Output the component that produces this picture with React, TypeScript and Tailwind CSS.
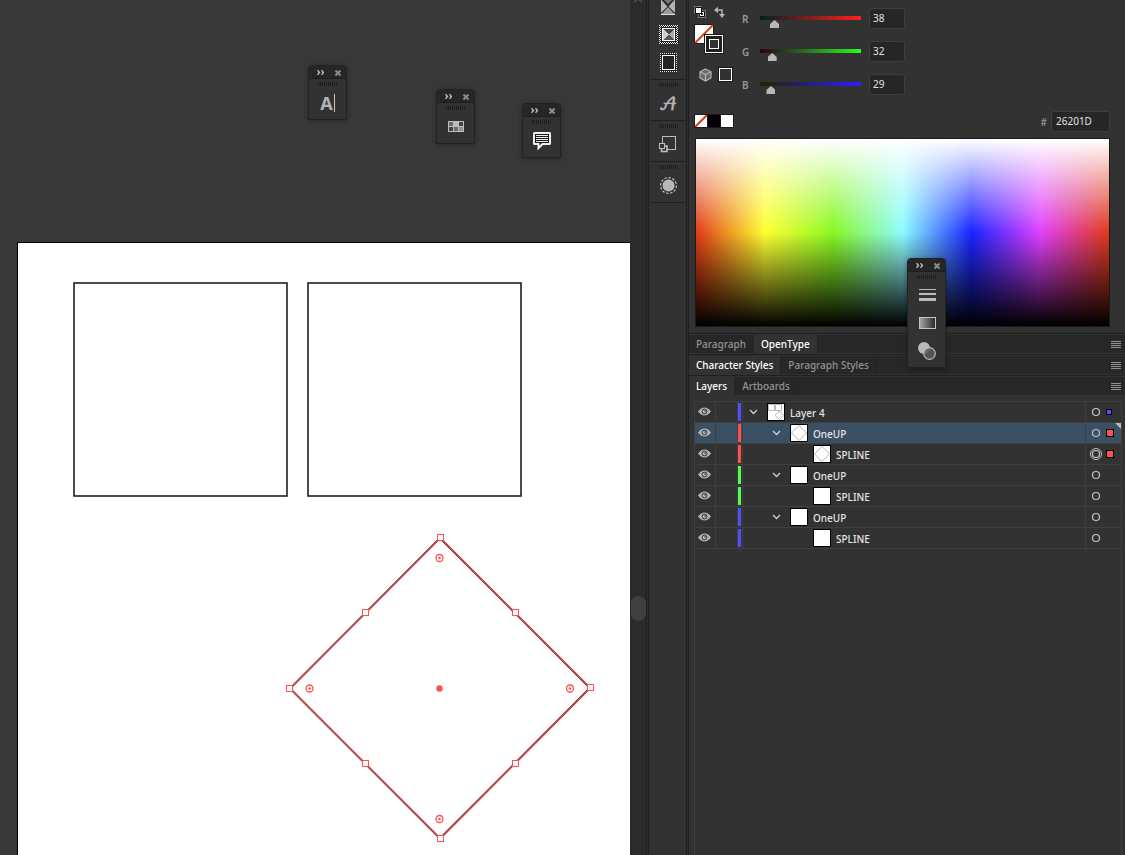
import { useState, type ReactNode } from "react";
import clsx from "clsx";

type Layer = {
  id: number;
  name: string;
  depth: number;
  bar: string;
  thumb: "page" | "diamond" | "blank";
  open?: boolean;
  selected?: boolean;
  targeted?: boolean;
  mark?: "small" | "large";
};

const layers: Layer[] = [
  { id: 1, name: "Layer 4", depth: 0, bar: "bg-[#4f4fff]", thumb: "page", open: true, mark: "small" },
  { id: 2, name: "OneUP", depth: 1, bar: "bg-[#ff4f4f]", thumb: "diamond", open: true, selected: true, mark: "large" },
  { id: 3, name: "SPLINE", depth: 2, bar: "bg-[#ff4f4f]", thumb: "diamond", targeted: true, mark: "large" },
  { id: 4, name: "OneUP", depth: 1, bar: "bg-[#4fff4f]", thumb: "blank", open: true },
  { id: 5, name: "SPLINE", depth: 2, bar: "bg-[#4fff4f]", thumb: "blank" },
  { id: 6, name: "OneUP", depth: 1, bar: "bg-[#4f4fff]", thumb: "blank", open: true },
  { id: 7, name: "SPLINE", depth: 2, bar: "bg-[#4f4fff]", thumb: "blank" },
];

const indents = ["pl-1", "pl-[27px]", "pl-[50px]"];

const channels = [
  { name: "R", value: 38, track: "bg-[linear-gradient(to_right,#00201d,#ff201d)]" },
  { name: "G", value: 32, track: "bg-[linear-gradient(to_right,#26001d,#26ff1d)]" },
  { name: "B", value: 29, track: "bg-[linear-gradient(to_right,#262000,#2620ff)]" },
];

const handles = [
  [440.5, 537.5],
  [515.5, 612.5],
  [590.5, 687.5],
  [515.5, 763.5],
  [440.5, 838.5],
  [365.5, 763.5],
  [289.5, 688.5],
  [365.5, 612.5],
];

const cornerWidgets = [
  [439.5, 558],
  [570, 688.5],
  [439.5, 819],
  [309.5, 688.5],
];

const Grip = () => (
  <svg width="19" height="4" className="block" aria-hidden="true">
    {Array.from({ length: 10 }, (_, i) => (
      <rect key={i} x={i * 2} width="1" height="4" fill="#1e1e1e" />
    ))}
  </svg>
);

const Palette = ({ className, label, children }: { className: string; label: string; children: ReactNode }) => (
  <section
    aria-label={label}
    className={clsx("absolute w-[39px] rounded-t border border-[#222] bg-[#323232] shadow-[0_1px_5px_rgba(0,0,0,0.3)]", className)}
  >
    <header className="flex h-[13px] items-center justify-between rounded-t border-b border-[#1e1e1e] bg-[#262626] pt-px pr-[5px] pl-2">
      <button aria-label="Expand panel">
        <svg width="7" height="5" className="block" fill="#b4b4b4">
          <path d="M0 0H1.200L3.500 2.500 1.200 5H0L1.200 2.500ZM4 0H5.200L7.500 2.500 5.200 5H4L5.200 2.500Z" />
        </svg>
      </button>
      <button aria-label="Close panel">
        <svg width="6" height="6" className="block" stroke="#8c8c8c" strokeWidth="2">
          <path d="M.5.5 5.500 5.500M5.500.5.5 5.500" />
        </svg>
      </button>
    </header>
    <div className="flex flex-col items-center pt-[3px]">
      <Grip />
      {children}
    </div>
  </section>
);

const IconButton = ({ label, className, children }: { label: string; className?: string; children: ReactNode }) => (
  <button aria-label={label} className={clsx("flex items-center justify-center", className)}>
    {children}
  </button>
);

const Artwork = () => (
  <svg className="absolute inset-0 h-full w-full" aria-label="Artboard">
    <rect x="17.5" y="242.5" width="100%" height="100%" fill="#fff" stroke="#000" />
    <g fill="none" stroke="#231f20" strokeWidth="1.6">
      <rect x="74" y="283" width="213" height="213" />
      <rect x="308" y="283" width="213" height="213" />
      <path d="M440 538 590 688 440 838.500 290 688.500Z" strokeWidth="1.8" />
    </g>
    <path d="M440.500 538 590.500 688 440.500 838.500 290 688.500Z" fill="none" stroke="#ff4f4f" strokeWidth="1.400" strokeOpacity=".9" />
    {handles.map(([x, y]) => (
      <rect key={`${x}-${y}`} x={x - 3} y={y - 3} width="6" height="6" fill="#fff" stroke="#ff4f4f" />
    ))}
    {cornerWidgets.map(([x, y]) => (
      <g key={`${x}-${y}`}>
        <circle cx={x} cy={y} r="3.5" fill="#fff" stroke="#ff4f4f" strokeWidth="1.3" />
        <circle cx={x} cy={y} r="1.300" fill="#ff4f4f" />
      </g>
    ))}
    <circle cx="439.5" cy="688.5" r="3.200" fill="#ff4f4f" />
  </svg>
);

const Workspace = () => (
  <main className="relative min-w-0 flex-1 overflow-hidden bg-[#383838]">
    <Artwork />
    <Palette label="Character" className="top-[65px] left-[308px]">
      <IconButton label="Character" className="h-[33px] gap-px">
        <span className="font-['Noto_Sans'] text-[18px] leading-5 font-bold text-[#b4b4b4]">A</span>
        <span className="h-[18px] w-px bg-[#c4c4c4]" />
      </IconButton>
    </Palette>
    <Palette label="Swatches" className="top-[89px] left-[436px]">
      <IconButton label="Swatches" className="h-[33px]">
        <svg width="16" height="11">
          <rect width="16" height="11" fill="#bcbcbc" />
          <rect x="1" y="1" width="4" height="4" fill="#6a6a6a" />
          <rect x="11" y="1" width="4" height="4" fill="#444" />
          <rect x="1" y="6" width="4" height="4" fill="#444" />
          <rect x="6" y="6" width="4" height="4" fill="#6a6a6a" />
          <rect x="11" y="6" width="4" height="4" fill="#909090" />
        </svg>
      </IconButton>
    </Palette>
    <Palette label="Comments" className="top-[103px] left-[522px]">
      <IconButton label="Comments" className="h-[33px] pt-[2px]">
        <svg width="18" height="19">
          <path d="M1 0H17L18 1V12L17 13H10L4.500 18.500V13H1L0 12V1Z" fill="#eef0ee" />
          <path d="M2 2H16V11H9L6.500 13.500V11H2Z" fill="#1a1a1a" />
          <path d="M3 3.500H15M3 5.500H15M3 7.500H15M3 9.500H15" stroke="#eef0ee" />
        </svg>
      </IconButton>
    </Palette>
  </main>
);

const Scrollbar = () => (
  <div className="relative w-4 shrink-0 bg-[#2b2b2b]">
    <svg width="9" height="3" className="absolute top-0 left-1" fill="none" stroke="#505050" strokeWidth="1.500">
      <path d="M0 2 3 0M5 0 8 2" />
    </svg>
    <div className="absolute top-[596px] left-px h-[25px] w-[15px] rounded-full bg-[#404040]" />
  </div>
);

const Divider = () => <div className="w-[3px] shrink-0 border-x border-[#202020] bg-[#2e2e2e]" />;

const DockGroup = ({ children }: { children: ReactNode }) => (
  <div className="flex h-[41px] flex-col items-center border-b border-[#202020] pt-[3px]">
    <Grip />
    {children}
  </div>
);

const Dock = () => (
  <nav aria-label="Panel dock" className="w-[37px] shrink-0 bg-[#323232] pl-px">
    <div className="flex h-20 flex-col items-center gap-[9px] border-b border-[#202020]">
      <IconButton label="Transform" className="h-4">
        <svg width="14" height="16">
          <path d="M0 0H14V15H0Z" fill="#777" />
          <path d="M0 0H3L7 4 11 0H12L7 6 2 2Z" fill="#2a2a2a" />
          <path d="M0 0H1L6.500 7 0 12Z" fill="#b4b4b4" />
          <path d="M14 0H13L7.500 7 14 12Z" fill="#b4b4b4" />
          <path d="M0 14.500 7 7 14 14.500Z" fill="#9a9a9a" />
          <path d="M1 0 13 13M13 0 1 13" stroke="#222" />
          <path d="M0 14.500H14" stroke="#ddd" />
        </svg>
      </IconButton>
      <IconButton label="Pattern">
        <svg width="19" height="19" shapeRendering="crispEdges">
          <rect width="19" height="19" fill="#222" />
          <path d="M0 .5H19M0 18.500H19M.5 0V19M18.500 0V19" stroke="#f0f0f0" strokeDasharray="1 1" />
          <path d="M1 1.500H18M1 17.500H18M1.500 1V18M17.500 1V18" stroke="#f0f0f0" strokeDasharray="1 1" />
          <rect x="3.500" y="3.500" width="12" height="12" fill="#777" stroke="#fff" />
          <path d="M4 4 9.500 9.500 4 15Z" fill="#ccc" />
          <path d="M15 4 9.500 9.500 15 15Z" fill="#aaa" />
          <path d="M4 4H15L9.500 9.500Z" fill="#484848" />
          <path d="M4 15H15L9.500 9.500Z" fill="#555" />
        </svg>
      </IconButton>
      <IconButton label="Artboard">
        <svg width="17" height="19" shapeRendering="crispEdges">
          <rect width="17" height="19" fill="#222" />
          <path d="M0 .5H17M0 18.500H17M.5 0V19M16.500 0V19" stroke="#f0f0f0" strokeDasharray="1 1" />
          <rect x="2.500" y="2.500" width="12" height="14" fill="#252525" stroke="#fff" />
        </svg>
      </IconButton>
    </div>
    <DockGroup>
      <IconButton label="Glyphs" className="h-[33px] pt-1">
        <span className="font-['DejaVu_Math_TeX_Gyre','DejaVu_Serif',serif] text-[17px] leading-5 font-bold text-[#b4b4b4]">𝒜</span>
      </IconButton>
    </DockGroup>
    <DockGroup>
      <IconButton label="Asset export" className="h-9">
        <svg width="18" height="17" fill="#323232" stroke="#bcbcbc">
          <rect x="3.500" y=".5" width="13" height="13" />
          <rect x="2.500" y="10" width="5.500" height="5.500" strokeWidth="1.600" />
          <rect x=".5" y="7.500" width="5" height="5" />
        </svg>
      </IconButton>
    </DockGroup>
    <DockGroup>
      <IconButton label="Appearance" className="h-[33px]">
        <svg width="17" height="17" fill="none">
          <circle cx="8.500" cy="8.500" r="6" fill="#b8b8b8" />
          <circle cx="8.500" cy="8.500" r="7.900" stroke="#c4c4c4" strokeWidth="1.200" strokeDasharray="2.500 1.600" />
        </svg>
      </IconButton>
    </DockGroup>
  </nav>
);

const FillStroke = () => (
  <div className="flex w-10 flex-col">
    <div className="flex justify-between">
      <button aria-label="Default fill and stroke">
        <svg width="12" height="12" className="block">
          <rect x="4.500" y="4.500" width="7" height="7" fill="#111" stroke="#777" />
          <rect x="6.500" y="6.500" width="3" height="3" fill="#323232" stroke="#fff" />
          <rect x=".5" y=".5" width="7" height="7" fill="#fff" stroke="#777" />
          <rect x="1.500" y="1.500" width="6" height="6" fill="#fff" stroke="#111" />
        </svg>
      </button>
      <button aria-label="Swap fill and stroke" className="mr-2">
        <svg width="12" height="12" className="block" fill="none" stroke="#b4b4b4" strokeWidth="1.500">
          <path d="M2 4H8V10" />
          <path d="M0 4 4 .8V7.200ZM8 12 5 8H11Z" fill="#b4b4b4" stroke="none" />
        </svg>
      </button>
    </div>
    <button aria-label="Fill and stroke" className="mt-[6px] self-start">
      <svg width="30" height="30" className="block">
        <rect x=".5" y=".5" width="19" height="19" fill="#fff" stroke="#1a1a1a" />
        <path d="M1 19 19 1" stroke="#dc3a16" strokeWidth="2" />
        <rect x="10" y="10" width="20" height="20" fill="#1a1a1a" />
        <rect x="11.500" y="11.500" width="17" height="17" fill="#26201d" stroke="#fff" />
        <rect x="15.500" y="15.500" width="9" height="9" fill="#323232" stroke="#fff" />
      </svg>
    </button>
    <div className="mt-[13px] flex items-center gap-[6px] pl-[5px]">
      <button aria-label="Web safe color">
        <svg width="13" height="14" className="block" fill="#6a6a6a" stroke="#b4b4b4" strokeWidth="1.200">
          <path d="M6.500 1 12 3.800V10L6.500 13 1 10V3.800Z" />
          <path d="M1 3.800 6.500 6.500 12 3.800M6.500 6.500V13" fill="none" />
        </svg>
      </button>
      <button aria-label="Current color" className="size-[15px] border border-[#1a1a1a] p-0">
        <span className="block size-full border border-white" />
      </button>
    </div>
  </div>
);

const ColorPanel = () => {
  const [rgb, setRgb] = useState(channels.map((c) => c.value));

  const setChannel = (index: number, value: number) => {
    setRgb(rgb.map((v, i) => (i === index ? value : v)));
  };

  return (
    <section aria-label="Color" className="pr-[15px] pb-[6px] pl-[5px]">
      <div className="flex pt-[6px]">
        <FillStroke />
        <div className="flex flex-col gap-3 pt-[2px] pl-2">
          {channels.map((c, i) => (
            <div key={c.name} className="flex items-center">
              <label htmlFor={`channel-${c.name}`} className="w-[13px] pt-[2px] text-[10px] font-semibold text-[#999]">
                {c.name}
              </label>
              <input
                id={`channel-${c.name}`}
                type="range"
                min={0}
                max={255}
                value={rgb[i]}
                onChange={(e) => setChannel(i, Number(e.target.value))}
                className={clsx(
                  "m-0 h-[21px] w-[110px] appearance-none bg-[length:101px_4px] bg-[position:50%_8px] bg-no-repeat",
                  "[&::-webkit-slider-runnable-track]:h-[21px]",
                  "[&::-webkit-slider-thumb]:mt-3 [&::-webkit-slider-thumb]:h-2 [&::-webkit-slider-thumb]:w-[9px] [&::-webkit-slider-thumb]:appearance-none [&::-webkit-slider-thumb]:bg-[#b8b8b8] [&::-webkit-slider-thumb]:[clip-path:polygon(50%_0,100%_50%,100%_100%,0_100%,0_50%)]",
                  c.track
                )}
              />
              <input
                aria-label={`${c.name} value`}
                value={rgb[i]}
                onChange={(e) => setChannel(i, Number(e.target.value) || 0)}
                className="ml-1 h-[21px] w-9 rounded-[3px] border border-[#3e3e3e] bg-[#262626] px-[3px] pb-[2px] text-[10px] text-[#e0e0e0]"
              />
            </div>
          ))}
        </div>
      </div>

      <div className="mt-4 flex h-[21px] items-center justify-between">
        <div className="mb-px flex h-[14px] gap-px border border-[#1a1a1a] bg-[#1a1a1a]">
          <button aria-label="None">
            <svg width="12" height="12" className="block">
              <rect width="12" height="12" fill="#fff" />
              <path d="M0 12 12 0" stroke="#dc3a16" strokeWidth="2" />
            </svg>
          </button>
          <button aria-label="Black" className="w-3 bg-[#040004]" />
          <button aria-label="White" className="w-3 bg-white" />
        </div>
        <div className="flex items-center gap-1">
          <label htmlFor="hex" className="pt-[2px] text-[10px] text-[#aaa]">
            #
          </label>
          <input
            id="hex"
            defaultValue="26201D"
            className="h-[21px] w-[59px] rounded-[3px] border border-[#3e3e3e] bg-[#262626] px-1 pb-px text-[10px] text-[#e0e0e0]"
          />
        </div>
      </div>

      <div className="mt-[6px] ml-px h-[189px] border border-[#1a1a1a] bg-[linear-gradient(to_bottom,#fff,rgba(255,255,255,0)_50%,rgba(0,0,0,0)_50%,#000),linear-gradient(to_right,#e03a16,#ffff30_16.7%,#88f824_33.3%,#8cfcff_50%,#1824ff_66.7%,#e040ff_83.3%,#e03a16)]" />
    </section>
  );
};

const TabPanel = ({ tabs, active, children }: { tabs: string[]; active: string; children?: ReactNode }) => (
  <section className="border-t border-[#202020] pt-px">
    <div className="flex h-[18px] items-stretch bg-[#272727]">
      <div role="tablist" className="flex">
        {tabs.map((tab) => (
          <button
            key={tab}
            role="tab"
            aria-selected={tab === active}
            className={clsx(
              "border-r border-[#222] px-[7px] pt-px text-[10px] leading-[17px] font-medium",
              tab === active ? "bg-[#323232] text-white" : "text-[#929292]"
            )}
          >
            {tab}
          </button>
        ))}
      </div>
      <button aria-label="Panel menu" className="mr-1 ml-auto">
        <svg width="10" height="7" className="block" stroke="#909090">
          <path d="M0 .5H10M0 2.500H10M0 4.500H10M0 6.500H10" />
        </svg>
      </button>
    </div>
    {children ?? <div className="h-px bg-[#323232]" />}
  </section>
);

const Eye = () => (
  <svg width="13" height="9" className="block">
    <path d="M0 4.500Q3 .5 6.500.5T13 4.500Q10 8.500 6.500 8.500T0 4.500Z" fill="#b4b4b4" />
    <circle cx="6.500" cy="4.500" r="2.400" fill="none" stroke="#323232" />
    <circle cx="7" cy="4" r=".8" fill="#323232" />
  </svg>
);

const Thumbnail = ({ kind }: { kind: Layer["thumb"] }) => (
  <svg width="18" height="18" className="shrink-0" fill="none">
    <rect x=".5" y=".5" width="17" height="17" fill="#fff" stroke="#000" />
    {kind === "diamond" && <path d="M9 1.500 16.500 9 9 16.500 1.500 9Z" stroke="#b4b4b4" />}
    {kind === "page" && <path d="M1.500 1.500H7.500V7.500H1.500ZM8.500 1.500H14.500V7.500H8.500ZM12.500 8 16.500 12.500 12.500 16.500 8 12.500Z" stroke="#b8b8b8" />}
  </svg>
);

const LayerRow = ({ layer }: { layer: Layer }) => (
  <li className={clsx("relative flex h-[21px] border-b border-[#3f3f3f]", layer.selected && "bg-[#3a5064]")}>
    <button aria-label={`Toggle ${layer.name}`} className="flex w-[21px] items-center border-r border-[#3f3f3f] pb-[2px] pl-[3px]">
      <Eye />
    </button>
    <div className="w-[22px] border-r border-[#3f3f3f]" />
    <div className="border-r border-[#3f3f3f] py-px pr-px">
      <div className={clsx("h-full w-[3px]", layer.bar)} />
    </div>
    <div className={clsx("flex flex-1 items-center gap-[5px]", indents[layer.depth])}>
      <span className="flex w-[15px] shrink-0 items-center pl-[2px]">
        {layer.open && (
          <button aria-label={`Collapse ${layer.name}`}>
            <svg width="9" height="6" className="block" fill="none" stroke="#d0d0d0" strokeWidth="1.300">
              <path d="M1 1 4.500 4.500 8 1" />
            </svg>
          </button>
        )}
      </span>
      <Thumbnail kind={layer.thumb} />
      <span className="pt-px text-[10px] leading-5 font-medium text-[#e4e4e4]">{layer.name}</span>
    </div>
    <div className="flex w-9 items-center border-l border-[#3f3f3f] pl-1">
      <button aria-label={`Target ${layer.name}`}>
        <svg width="12" height="12" className="block" fill="none" stroke="#c4c4c4">
          <circle cx="6" cy="6" r="3.500" strokeWidth="1.200" />
          {layer.targeted && <circle cx="6" cy="6" r="5.500" />}
        </svg>
      </button>
      {layer.mark === "small" && <span className="ml-1 size-[6px] border border-black bg-[#4f4fff]" />}
      {layer.mark === "large" && <span className="ml-1 size-2 border border-black bg-[#ff4f4f]" />}
    </div>
    {layer.selected && (
      <svg width="6" height="6" className="absolute top-0 right-0">
        <path d="M0 0H6V6Z" fill="#b8b8b8" />
      </svg>
    )}
  </li>
);

const Sidebar = () => (
  <aside className="relative flex w-[436px] shrink-0 flex-col bg-[#323232]">
    <ColorPanel />
    <TabPanel tabs={["Paragraph", "OpenType"]} active="OpenType" />
    <TabPanel tabs={["Character Styles", "Paragraph Styles"]} active="Character Styles" />
    <TabPanel tabs={["Layers", "Artboards"]} active="Layers">
      <div className="h-[6px]" />
    </TabPanel>
    <div className="mr-[3px] ml-[5px] flex-1 border-x border-t border-[#3f3f3f]">
      <ul>
        {layers.map((layer) => (
          <LayerRow key={layer.id} layer={layer} />
        ))}
      </ul>
    </div>

    <Palette label="Stroke, gradient and transparency" className="top-[258px] right-[179px]">
      <div className="flex flex-col pl-px">
        <IconButton label="Stroke" className="h-8">
          <svg width="17" height="12" fill="#bcbcbc">
            <rect width="17" height="1" />
            <rect y="4" width="17" height="2" />
            <rect y="9" width="17" height="3" />
          </svg>
        </IconButton>
        <IconButton label="Gradient" className="h-6">
          <svg width="17" height="12">
            <defs>
              <linearGradient id="ramp">
                <stop stopColor="#a8a8a8" />
                <stop offset="1" stopColor="#262626" />
              </linearGradient>
            </defs>
            <rect x=".5" y=".5" width="16" height="11" fill="url(#ramp)" stroke="#c4c4c4" />
          </svg>
        </IconButton>
        <IconButton label="Transparency" className="h-8">
          <svg width="18" height="18">
            <circle cx="6" cy="6" r="6" fill="#b8b8b8" />
            <circle cx="11.500" cy="11.500" r="5.800" fill="#5a5a5a" fillOpacity=".85" stroke="#b8b8b8" strokeWidth="1.200" />
          </svg>
        </IconButton>
      </div>
    </Palette>
  </aside>
);

const App = () => (
  <div className="flex h-screen overflow-hidden bg-[#323232] font-['Noto_Sans',sans-serif]">
    <Workspace />
    <Scrollbar />
    <Divider />
    <Dock />
    <Divider />
    <Sidebar />
  </div>
);

export default App;
